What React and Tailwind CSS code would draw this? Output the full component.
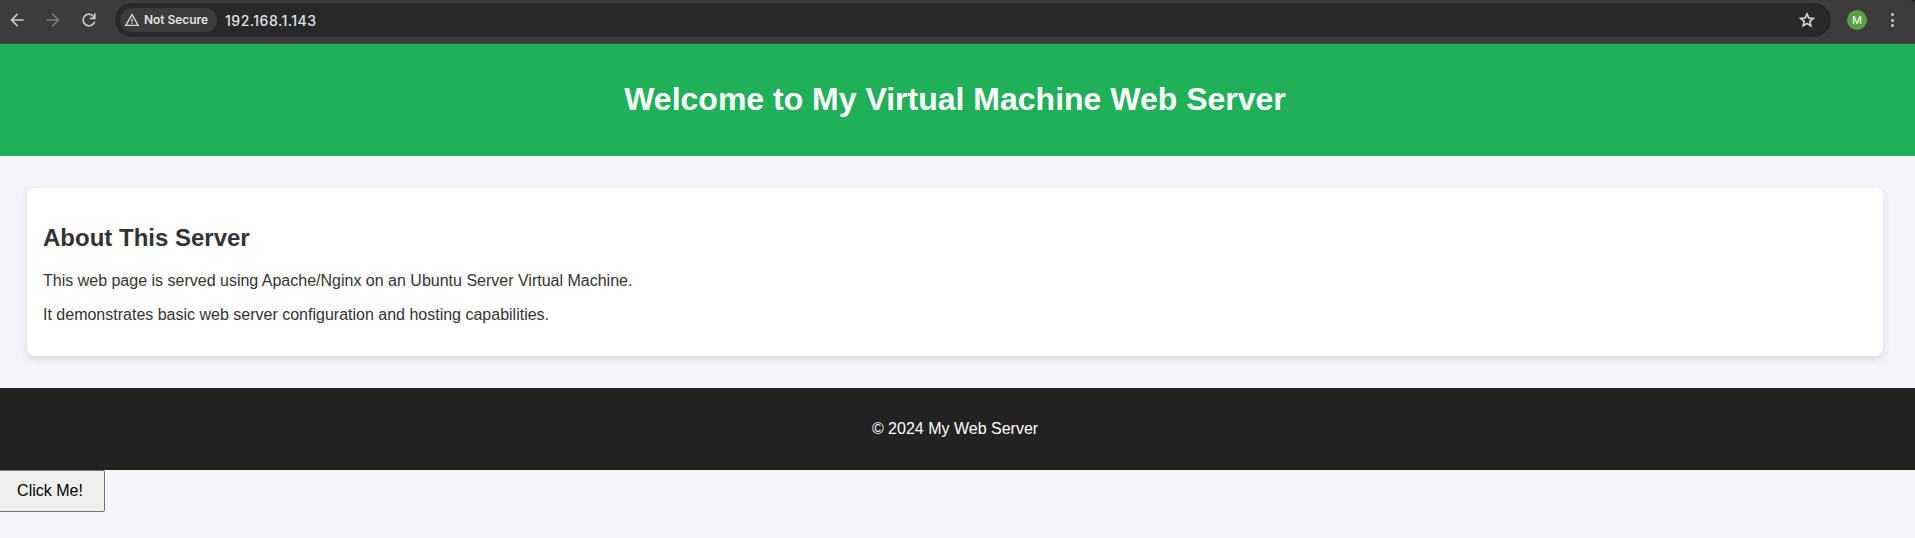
function BrowserBar() {
  return (
    <div className="flex h-11 items-start bg-[#1c1c1c]">
      <div className="flex h-11 w-full items-start rounded-tr-[5px] border-b border-[#464646] bg-[#3c3c3c] pt-[3px] font-[Inter,sans-serif]">
        <div className="flex h-[34px] w-[115px] shrink-0 items-center pl-[7px]">
          <svg className="size-5" viewBox="0 -960 960 960" fill="#c7c7c7">
            <path d="m313-440 224 224-57 56-320-320 320-320 57 56-224 224h487v80H313Z" />
          </svg>
          <svg className="ml-4 size-5" viewBox="0 -960 960 960" fill="#777777">
            <path d="M647-440H160v-80h487L423-744l57-56 320 320-320 320-57-56 224-224Z" />
          </svg>
          <svg className="ml-4 size-5" viewBox="0 -960 960 960" fill="#c7c7c7">
            <path d="M480-160q-134 0-227-93t-93-227q0-134 93-227t227-93q69 0 132 28.500T720-690v-110h80v280H520v-80h168q-32-56-87.500-88T480-720q-100 0-170 70t-70 170q0 100 70 170t170 70q77 0 139-44t87-116h84q-28 106-114 173t-196 67Z" />
          </svg>
        </div>
        <div className="flex h-[34px] w-[1716px] shrink-0 items-center rounded-full bg-[#282828] pl-[5px] pr-[14px]">
          <div className="flex h-6 w-[97px] items-center rounded-full bg-[#3c3c3c] pl-1">
            <svg className="size-4" viewBox="0 -960 960 960" fill="#d8d8d8">
              <path d="m40-120 440-760 440 760H40Zm138-80h604L480-720 178-200Zm302-40q17 0 28.500-11.500T520-280q0-17-11.500-28.500T480-320q-17 0-28.500 11.500T440-280q0 17 11.500 28.500T480-240Zm-40-120h80v-200h-80v200Z" />
            </svg>
            <span className="ml-1 whitespace-nowrap text-[12px] font-semibold tracking-[-0.05px] text-[#e3e3e3]">Not Secure</span>
          </div>
          <span className="ml-2 text-[14px] font-medium tracking-[0.5px] text-[#e3e3e3]">192.168.1.143</span>
          <svg className="ml-auto size-5" viewBox="0 -960 960 960" fill="#d0d0d0">
            <path d="m354-287 126-76 126 77-33-144 111-96-146-13-58-136-58 135-146 13 111 97-33 143ZM233-120l65-281L80-590l288-25 112-265 112 265 288 25-218 189 65 281-247-149-247 149Z" />
          </svg>
        </div>
        <div className="ml-4 mt-[7px] flex size-5 items-center justify-center rounded-full bg-[#5c9f43] text-[11px] text-white">M</div>
        <div className="ml-[23px] mt-[10px] flex w-[4px] flex-col items-center gap-[2.5px]">
          <i className="size-[3px] rounded-full bg-[#c7c7c7]" />
          <i className="size-[3px] rounded-full bg-[#c7c7c7]" />
          <i className="size-[3px] rounded-full bg-[#c7c7c7]" />
        </div>
      </div>
    </div>
  );
}

export default function App() {
  return (
    <div className="h-[538px] overflow-hidden bg-[#f4f4f9]">
      <BrowserBar />
      <div className="-ml-[5px] font-['Liberation_Sans',Arial,sans-serif] text-[16px] leading-[18px] text-[#333]">
        <header className="h-28 bg-[#1fb058] pt-[37px] text-center text-white">
          <h1 className="text-[32px] font-bold leading-9">Welcome to My Virtual Machine Web Server</h1>
        </header>
        <main className="m-8 h-[168px] rounded-lg bg-white px-4 pt-9 shadow-[0_4px_8px_rgba(0,0,0,0.1)]">
          <h2 className="text-[24px] font-bold leading-7">About This Server</h2>
          <p className="mt-5">This web page is served using Apache/Nginx on an Ubuntu Server Virtual Machine.</p>
          <p className="mt-4">It demonstrates basic web server configuration and hosting capabilities.</p>
        </main>
        <footer className="h-[82px] bg-[#222] pt-8 text-center text-white">
          <p>© 2024 My Web Server</p>
        </footer>
        <button className="block h-[42px] w-[110px] rounded-[2px] border border-[#767676] bg-[#efefef] text-black">Click Me!</button>
      </div>
    </div>
  );
}
